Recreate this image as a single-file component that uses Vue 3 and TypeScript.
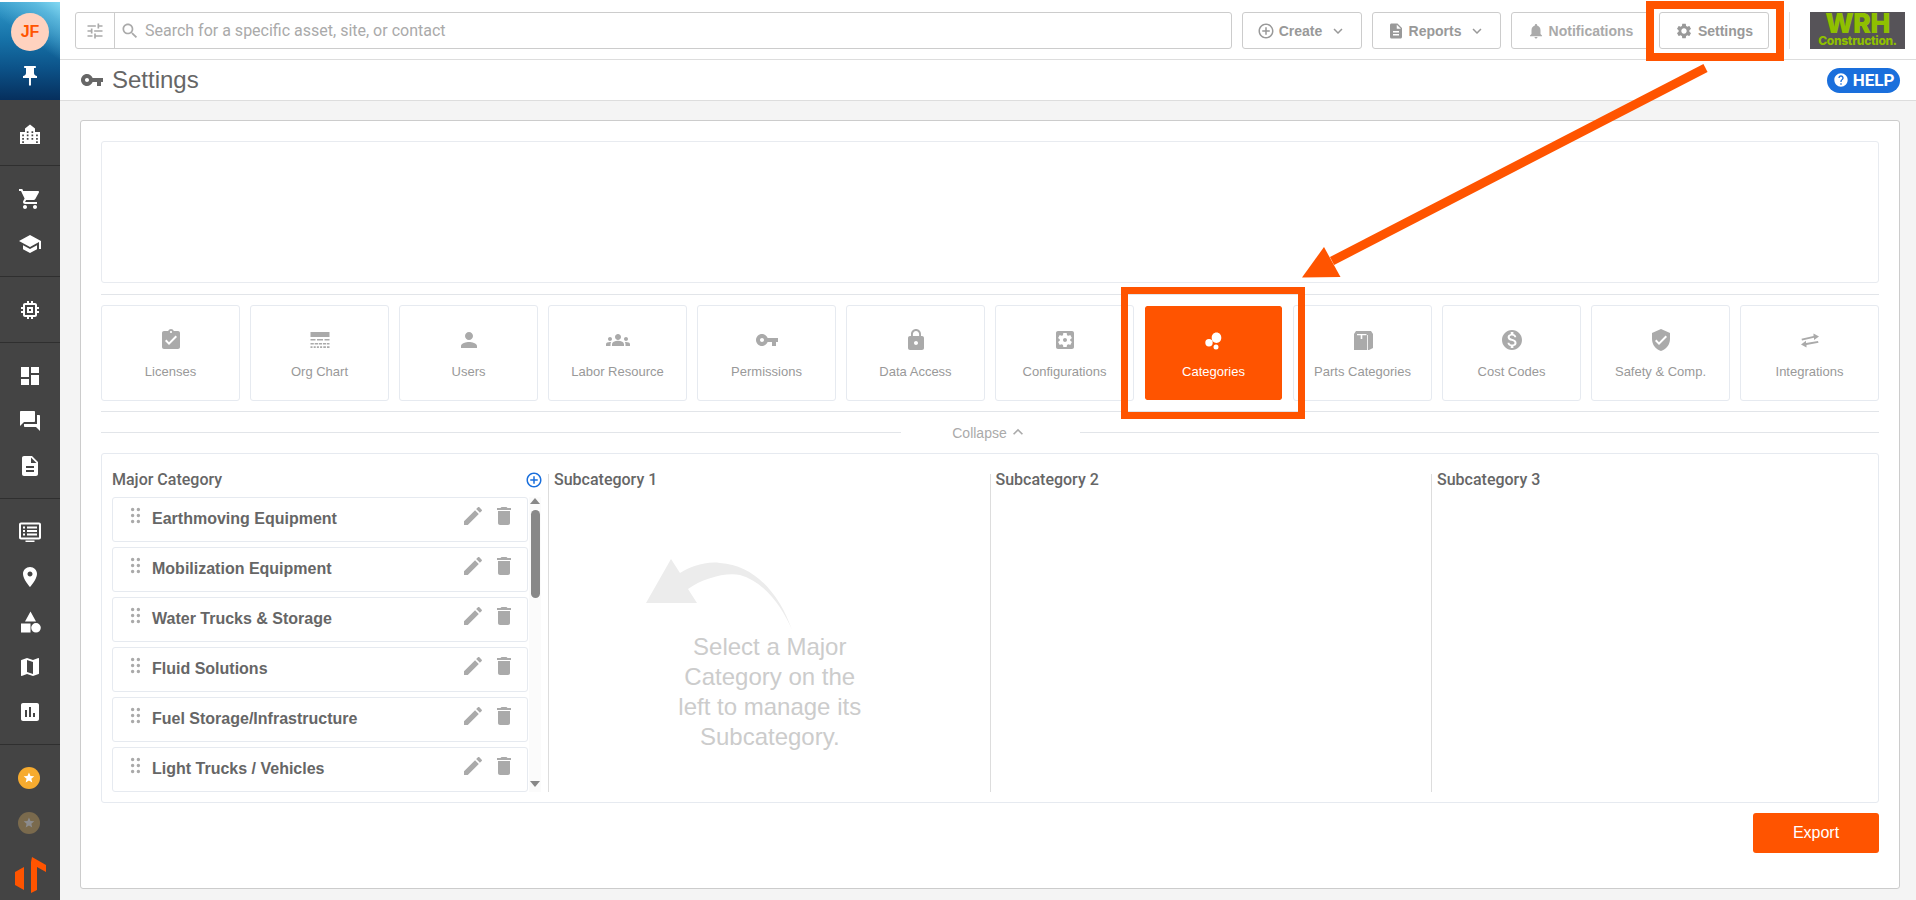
<script setup lang="ts">
const icons = {
  pin: 'M16 9V4h1c.55 0 1-.45 1-1s-.45-1-1-1H7c-.55 0-1 .45-1 1s.45 1 1 1h1v5c0 1.66-1.34 3-3 3v2h5.97v7l1 1 1-1v-7H19v-2c-1.66 0-3-1.34-3-3z',
  building: 'M2 22V10h5V6.5L12 2.5l5 4V10h5v12H2zM4.200 12.500v1.700h1.700v-1.700zM4.200 16v1.700h1.700V16zM4.200 19.200v1.700h1.700v-1.700zM8.800 9.200v1.700h1.700V9.200zM8.800 12.500v1.700h1.700v-1.700zM8.800 16v1.700h1.700V16zM13.500 9.200v1.700h1.700V9.200zM13.500 12.500v1.700h1.700v-1.700zM13.500 16v1.700h1.700V16zM18.100 12.500v1.700h1.700v-1.700zM18.100 16v1.700h1.700V16zM18.100 19.200v1.700h1.700v-1.700z',
  cart: 'M7 18c-1.1 0-1.99.9-1.99 2S5.900 22 7 22s2-.9 2-2-.9-2-2-2zM1 2v2h2l3.600 7.590-1.350 2.450c-.16.28-.25.61-.25.96 0 1.100.9 2 2 2h12v-2H7.420c-.14 0-.25-.11-.25-.25l.03-.12.9-1.630h7.450c.75 0 1.410-.41 1.750-1.030l3.580-6.490c.08-.14.12-.31.12-.48 0-.55-.45-1-1-1H5.210l-.94-2H1zm16 16c-1.100 0-1.990.9-1.990 2s.89 2 1.990 2 2-.9 2-2-.9-2-2-2z',
  school: 'M5 13.180v4L12 21l7-3.820v-4L12 17l-7-3.820zM12 3L1 9l11 6 9-4.910V17h2V9L12 3z',
  chip: 'M15 9H9v6h6V9zm-2 4h-2v-2h2v2zm8-2V9h-2V7c0-1.100-.9-2-2-2h-2V3h-2v2h-2V3H9v2H7c-1.100 0-2 .9-2 2v2H3v2h2v2H3v2h2v2c0 1.100.9 2 2 2h2v2h2v-2h2v2h2v-2h2c1.100 0 2-.9 2-2v-2h2v-2h-2v-2h2zm-4 6H7V7h10v10z',
  dashboard: 'M3 13h8V3H3v10zm0 8h8v-6H3v6zm10 0h8V11h-8v10zm0-18v6h8V3h-8z',
  forum: 'M21 6h-2v9H6v2c0 .55.45 1 1 1h11l4 4V7c0-.55-.45-1-1-1zm-4 6V3c0-.55-.45-1-1-1H3c-.55 0-1 .45-1 1v14l4-4h10c.55 0 1-.45 1-1z',
  doc: 'M14 2H6c-1.100 0-1.990.9-1.990 2L4 20c0 1.100.89 2 1.990 2H18c1.100 0 2-.9 2-2V8l-6-6zm2 16H8v-2h8v2zm0-4H8v-2h8v2zm-3-5V3.500L18.500 9H13z',
  monitor: 'M3 2.500h18c1.100 0 2 .9 2 2v13c0 1.100-.9 2-2 2H3c-1.100 0-2-.9-2-2v-13c0-1.100.9-2 2-2zM3 4.500v13h18v-13zM5 6.500h2v2H5zM9 6.500h10v2H9zM5 10h2v2H5zM9 10h10v2H9zM5 13.500h2v2H5zM9 13.500h10v2H9zM7.500 20.500h9V22h-9z',
  place: 'M12 2C8.130 2 5 5.130 5 9c0 5.250 7 13 7 13s7-7.750 7-13c0-3.870-3.130-7-7-7zm0 9.500c-1.380 0-2.500-1.120-2.500-2.500s1.120-2.500 2.500-2.500 2.500 1.120 2.500 2.500-1.120 2.500-2.500 2.500z',
  shapes: 'M12.500 1.500L18 11.500H7zM3 13.500h9.500V22.500H3zM18 13a4.800 4.800 0 1 1 0 9.600a4.800 4.800 0 1 1 0-9.600z',
  map: 'M20.500 3l-.16.03L15 5.100 9 3 3.360 4.900c-.21.07-.36.25-.36.48V20.500c0 .28.22.5.5.5l.16-.03L9 18.900l6 2.100 5.640-1.900c.21-.07.36-.25.36-.48V3.500c0-.28-.22-.5-.5-.5zM15 19l-6-2.110V5l6 2.110V19z',
  report: 'M19 3H5c-1.100 0-2 .9-2 2v14c0 1.100.9 2 2 2h14c1.100 0 2-.9 2-2V5c0-1.100-.9-2-2-2zM9 17H7v-7h2v7zm4 0h-2V7h2v10zm4 0h-2v-4h2v4z',
  key: 'M12.650 10C11.830 7.670 9.610 6 7 6c-3.310 0-6 2.690-6 6s2.690 6 6 6c2.610 0 4.830-1.670 5.650-4H17v4h4v-4h2v-4H12.650zM7 14c-1.100 0-2-.9-2-2s.9-2 2-2 2 .9 2 2-.9 2-2 2z',
  tune: 'M3 17v2h6v-2H3zM3 5v2h10V5H3zm10 16v-2h8v-2h-8v-2h-2v6h2zM7 9v2H3v2h4v2h2V9H7zm14 4v-2H11v2h10zm-6-4h2V7h4V5h-4V3h-2v6z',
  search: 'M15.500 14h-.79l-.28-.27C15.410 12.590 16 11.110 16 9.500 16 5.910 13.090 3 9.500 3S3 5.910 3 9.500 5.910 16 9.500 16c1.610 0 3.090-.59 4.230-1.570l.27.28v.79l5 4.990L20.490 19l-4.990-5zm-6 0C7.010 14 5 11.990 5 9.500S7.010 5 9.500 5 14 7.010 14 9.500 11.990 14 9.500 14z',
  add: 'M13 7h-2v4H7v2h4v4h2v-4h4v-2h-4V7zm-1-5C6.480 2 2 6.480 2 12s4.480 10 10 10 10-4.480 10-10S17.520 2 12 2zm0 18c-4.410 0-8-3.590-8-8s3.590-8 8-8 8 3.590 8 8-3.590 8-8 8z',
  down: 'M7.410 8.590L12 13.170l4.590-4.580L18 10l-6 6-6-6 1.410-1.410z',
  up: 'M12 8l-6 6 1.410 1.410L12 10.830l4.590 4.580L18 14z',
  bell: 'M12 22c1.100 0 2-.9 2-2h-4c0 1.100.89 2 2 2zm6-6v-5c0-3.070-1.640-5.640-4.500-6.320V4c0-.83-.67-1.500-1.500-1.500s-1.500.67-1.500 1.500v.68C7.630 5.360 6 7.920 6 11v5l-2 2v1h16v-1l-2-2z',
  gear: 'M19.140 12.940c.04-.3.06-.61.06-.94 0-.32-.02-.64-.07-.94l2.030-1.580c.18-.14.23-.41.12-.61l-1.920-3.320c-.12-.22-.37-.29-.59-.22l-2.390.96c-.5-.38-1.030-.7-1.620-.94l-.36-2.540c-.04-.24-.24-.41-.48-.41h-3.840c-.24 0-.43.17-.47.41l-.36 2.540c-.59.24-1.130.57-1.620.94l-2.390-.96c-.22-.08-.47 0-.59.22L2.740 8.870c-.12.21-.08.47.12.61l2.030 1.580c-.05.3-.09.63-.09.94s.02.64.07.94l-2.030 1.580c-.18.14-.23.41-.12.61l1.920 3.320c.12.22.37.29.59.22l2.390-.96c.5.38 1.030.7 1.620.94l.36 2.540c.05.24.24.41.48.41h3.840c.24 0 .44-.17.47-.41l.36-2.540c.59-.24 1.130-.56 1.620-.94l2.390.96c.22.08.47 0 .59-.22l1.920-3.320c.12-.22.07-.47-.12-.61l-2.010-1.580zM12 15.600c-1.980 0-3.600-1.620-3.600-3.600s1.620-3.600 3.600-3.600 3.600 1.620 3.600 3.600-1.620 3.600-3.600 3.600z',
  help: 'M12 2C6.480 2 2 6.480 2 12s4.480 10 10 10 10-4.480 10-10S17.520 2 12 2zm1 17h-2v-2h2v2zm2.070-7.750l-.9.92C13.450 12.900 13 13.500 13 15h-2v-.5c0-1.100.45-2.100 1.170-2.830l1.240-1.260c.37-.36.59-.86.59-1.410 0-1.100-.9-2-2-2s-2 .9-2 2H8c0-2.210 1.790-4 4-4s4 1.790 4 4c0 .88-.36 1.680-.93 2.250z',
  edit: 'M3 17.250V21h3.750L17.810 9.940l-3.750-3.750L3 17.250zM20.710 7.040c.39-.39.39-1.020 0-1.410l-2.340-2.340c-.39-.39-1.020-.39-1.410 0l-1.830 1.830 3.750 3.750 1.830-1.830z',
  trash: 'M6 19c0 1.100.9 2 2 2h8c1.100 0 2-.9 2-2V7H6v12zM19 4h-3.500l-1-1h-5l-1 1H5v2h14V4z',
  drag: 'M9 4a1.800 1.800 0 1 1 0 3.600a1.800 1.800 0 1 1 0-3.600zM15 4a1.800 1.800 0 1 1 0 3.600a1.800 1.800 0 1 1 0-3.600zM9 10.200a1.800 1.800 0 1 1 0 3.600a1.800 1.800 0 1 1 0-3.600zM15 10.200a1.800 1.800 0 1 1 0 3.600a1.800 1.800 0 1 1 0-3.600zM9 16.400a1.800 1.800 0 1 1 0 3.600a1.800 1.800 0 1 1 0-3.600zM15 16.400a1.800 1.800 0 1 1 0 3.600a1.800 1.800 0 1 1 0-3.600z',
  clipboard: 'M19 3h-4.180C14.400 1.840 13.300 1 12 1c-1.300 0-2.400.84-2.820 2H5c-1.100 0-2 .9-2 2v14c0 1.100.9 2 2 2h14c1.100 0 2-.9 2-2V5c0-1.100-.9-2-2-2zm-7 0c.55 0 1 .45 1 1s-.45 1-1 1-1-.45-1-1 .45-1 1-1zm-2 14l-4-4 1.410-1.410L10 14.170l6.590-6.590L18 9l-8 8z',
  org: 'M2.500 4h19v5h-19zM2.500 11h5v1.600h-5zM9 11h6v1.600H9zM16.500 11h5v1.600h-5zM2.500 15h3.300v1.600H2.500zM6.700 15h3.300v1.600H6.700zM10.800 15h3.300v1.600h-3.300zM15 15h3v1.600h-3zM18.800 15h2.700v1.600h-2.700zM2.500 18.300h2v1.700h-2zM5.700 18.300h2v1.700h-2zM8.900 18.300h2v1.700h-2zM12.100 18.300h2v1.700h-2zM15.300 18.300h2.600v1.700h-2.600zM19 18.300h2.500v1.700H19z',
  person: 'M12 12c2.210 0 4-1.790 4-4s-1.790-4-4-4-4 1.790-4 4 1.790 4 4 4zm0 2c-2.670 0-8 1.340-8 4v2h16v-2c0-2.660-5.330-4-8-4z',
  groups: 'M4 13c1.100 0 2-.9 2-2 0-1.100-.9-2-2-2s-2 .9-2 2c0 1.100.9 2 2 2zM5.130 14.100C4.760 14.040 4.390 14 4 14c-.99 0-1.930.21-2.780.58C.48 14.900 0 15.620 0 16.430V18h4.500v-1.610c0-.83.23-1.610.63-2.290zM20 13c1.100 0 2-.9 2-2 0-1.100-.9-2-2-2s-2 .9-2 2c0 1.100.9 2 2 2zM24 16.430c0-.81-.48-1.530-1.220-1.850C21.930 14.210 20.990 14 20 14c-.39 0-.76.04-1.130.1.4.68.63 1.460.63 2.290V18H24v-1.570zM16.240 13.650c-1.170-.52-2.610-.9-4.240-.9-1.630 0-3.070.39-4.240.9C6.680 14.130 6 15.210 6 16.390V18h12v-1.610c0-1.180-.68-2.260-1.760-2.740zM12 12c1.660 0 3-1.340 3-3s-1.340-3-3-3-3 1.340-3 3 1.340 3 3 3z',
  lock: 'M18 8h-1V6c0-2.760-2.240-5-5-5S7 3.240 7 6v2H6c-1.100 0-2 .9-2 2v10c0 1.100.9 2 2 2h12c1.100 0 2-.9 2-2V10c0-1.100-.9-2-2-2zm-6 9c-1.100 0-2-.9-2-2s.9-2 2-2 2 .9 2 2-.9 2-2 2zm3.100-9H8.900V6c0-1.710 1.390-3.100 3.100-3.100 1.710 0 3.100 1.390 3.100 3.100v2z',
  config: 'M12 10c-1.100 0-2 .9-2 2s.9 2 2 2 2-.9 2-2-.9-2-2-2zm7-7H5c-1.110 0-2 .9-2 2v14c0 1.100.89 2 2 2h14c1.110 0 2-.9 2-2V5c0-1.100-.89-2-2-2zm-1.750 9c0 .23-.02.46-.05.68l1.480 1.160c.13.11.17.3.08.45l-1.400 2.420c-.09.15-.27.21-.43.15l-1.740-.7c-.36.28-.76.51-1.180.69l-.26 1.850c-.03.17-.18.3-.35.3h-2.800c-.17 0-.32-.13-.35-.29l-.26-1.850c-.43-.18-.82-.41-1.180-.69l-1.740.7c-.16.06-.34 0-.43-.15l-1.400-2.420c-.09-.15-.05-.34.08-.45l1.480-1.160c-.03-.23-.05-.46-.05-.69 0-.23.02-.46.05-.68l-1.480-1.160c-.13-.11-.17-.3-.08-.45l1.400-2.420c.09-.15.27-.21.43-.15l1.740.7c.36-.28.76-.51 1.180-.69l.26-1.850c.03-.17.18-.3.35-.3h2.800c.17 0 .32.13.35.29l.26 1.850c.43.18.82.41 1.180.69l1.740-.7c.16-.06.34 0 .43.15l1.400 2.420c.09.15.05.34-.08.45l-1.480 1.160c.03.23.05.46.05.69z',
  bubbles: 'M14.500 4.500c2.800 0 4.800 2.200 4.800 5.200s-2 5.200-4.800 5.200-4.800-2.200-4.800-5.200 2-5.200 4.800-5.200zM7 11a3.700 3.700 0 1 1 0 7.400A3.700 3.700 0 1 1 7 11zM14 16.500a2.500 2.500 0 1 1 0 5a2.500 2.500 0 1 1 0-5z',
  box: 'M5 3H20L22 6V20L18 22H3V6zM6 6v1.300h3.700V11h1.600V7.300h4.200V6zM16 7v15h.8V7z',
  dollar: 'M12 2C6.480 2 2 6.480 2 12s4.480 10 10 10 10-4.480 10-10S17.520 2 12 2zm1.410 16.090V20h-2.670v-1.930c-1.710-.36-3.160-1.460-3.270-3.400h1.960c.1 1.050.82 1.870 2.650 1.870 1.960 0 2.400-.98 2.400-1.590 0-.83-.44-1.610-2.670-2.140-2.480-.6-4.180-1.620-4.180-3.670 0-1.720 1.390-2.840 3.110-3.210V4h2.670v1.950c1.860.45 2.790 1.860 2.850 3.390H14.300c-.05-1.110-.64-1.870-2.220-1.870-1.500 0-2.400.68-2.400 1.640 0 .84.65 1.390 2.670 1.910s4.180 1.390 4.180 3.910c-.01 1.830-1.380 2.830-3.120 3.160z',
  shield: 'M12 1L3 5v6c0 5.550 3.840 10.740 9 12 5.160-1.260 9-6.450 9-12V5l-9-4zm-2 16l-4-4 1.410-1.410L10 14.170l6.590-6.590L18 9l-8 8z',
  swap: 'M4 12.500L16 9.800V12L21 8.500L15.500 5.500V8L3.500 10.700zM20 13L8 15V12.800L3 16.500L8.500 19.500V17L20.500 14.800z'
}

const sideGroups: string[][] = [
  [icons.building],
  [icons.cart, icons.school],
  [icons.chip],
  [icons.dashboard, icons.forum, icons.doc],
  [icons.monitor, icons.place, icons.shapes, icons.map, icons.report]
]

const tiles = [
  { label: 'Licenses', icon: icons.clipboard },
  { label: 'Org Chart', icon: icons.org },
  { label: 'Users', icon: icons.person },
  { label: 'Labor Resource', icon: icons.groups },
  { label: 'Permissions', icon: icons.key },
  { label: 'Data Access', icon: icons.lock },
  { label: 'Configurations', icon: icons.config },
  { label: 'Categories', icon: icons.bubbles, active: true },
  { label: 'Parts Categories', icon: icons.box },
  { label: 'Cost Codes', icon: icons.dollar },
  { label: 'Safety & Comp.', icon: icons.shield },
  { label: 'Integrations', icon: icons.swap }
]

const categories = [
  'Earthmoving Equipment',
  'Mobilization Equipment',
  'Water Trucks & Storage',
  'Fluid Solutions',
  'Fuel Storage/Infrastructure',
  'Light Trucks / Vehicles'
]

const starPath = 'M12 17.270L18.180 21l-1.640-7.030L22 9.240l-7.190-.61L12 2 9.190 8.630 2 9.240l5.460 4.730L5.820 21z'
</script>

<template>
  <div class="app">
    <aside class="side">
      <div class="side-top">
        <div class="avatar">JF</div>
        <svg class="side-icon pin" viewBox="0 0 24 24"><path :d="icons.pin" /></svg>
      </div>
      <div v-for="(group, g) in sideGroups" :key="g" class="side-group" :class="'g' + g">
        <div v-for="(d, i) in group" :key="i" class="side-row">
          <svg class="side-icon" viewBox="0 0 24 24"><path :d="d" /></svg>
        </div>
      </div>
      <div class="side-end">
        <div class="side-row">
          <svg class="star" viewBox="0 0 24 24"><circle cx="12" cy="12" r="12" fill="#f6ab2f" /><path :d="starPath" fill="#fff" transform="translate(5 4.800) scale(.58)" /></svg>
        </div>
        <div class="side-row">
          <svg class="star" viewBox="0 0 24 24"><circle cx="12" cy="12" r="12" fill="#7a6a4d" /><path :d="starPath" fill="#8c8c8e" transform="translate(5 4.800) scale(.58)" /></svg>
        </div>
        <svg class="brand" viewBox="0 0 31 36">
          <path d="M0 15L9 10V33L0 28z" fill="#ff5400" />
          <path d="M16 5L17 0L31 8V15L22 10V33L16 36z" fill="#ff5400" />
        </svg>
      </div>
    </aside>

    <div class="main">
      <header class="top">
        <div class="search">
          <div class="search-tune"><svg class="i20" viewBox="0 0 24 24"><path :d="icons.tune" /></svg></div>
          <svg class="i20 search-glass" viewBox="0 0 24 24"><path :d="icons.search" /></svg>
          <span class="search-text">Search for a specific asset, site, or contact</span>
        </div>
        <button class="tbtn b-create"><svg class="i18" viewBox="0 0 24 24"><path :d="icons.add" /></svg><span>Create</span><svg class="i18 chev" viewBox="0 0 24 24"><path :d="icons.down" /></svg></button>
        <button class="tbtn b-reports"><svg class="i18" viewBox="0 0 24 24"><path :d="icons.doc" /></svg><span>Reports</span><svg class="i18 chev" viewBox="0 0 24 24"><path :d="icons.down" /></svg></button>
        <button class="tbtn b-notes"><svg class="i18" viewBox="0 0 24 24"><path :d="icons.bell" /></svg><span>Notifications</span></button>
        <button class="tbtn b-settings"><svg class="i18" viewBox="0 0 24 24"><path :d="icons.gear" /></svg><span>Settings</span></button>
        <div class="vsep"></div>
        <div class="logo">
          <span class="logo-big">WRH</span>
          <span class="logo-small">Construction.</span>
        </div>
      </header>

      <div class="title-bar">
        <svg class="title-key" viewBox="0 0 24 24"><path :d="icons.key" /></svg>
        <h1 class="title">Settings</h1>
        <div class="help"><svg class="help-icon" viewBox="0 0 24 24"><path :d="icons.help" /></svg><span>HELP</span></div>
      </div>

      <div class="content">
        <section class="card">
          <div class="blank"></div>
          <hr class="rule rule-a" />
          <div class="tiles">
            <div v-for="t in tiles" :key="t.label" class="tile" :class="{ active: t.active }">
              <svg class="tile-icon" viewBox="0 0 24 24"><path :d="t.icon" /></svg>
              <span class="tile-label">{{ t.label }}</span>
            </div>
          </div>
          <hr class="rule rule-b" />
          <div class="collapse">
            <span class="collapse-line"></span>
            <span class="collapse-text">Collapse<svg class="collapse-up" viewBox="0 0 24 24"><path :d="icons.up" /></svg></span>
            <span class="collapse-line"></span>
          </div>

          <div class="panel">
            <div class="col col-major">
              <div class="col-head">
                <span>Major Category</span>
                <svg class="col-add" viewBox="0 0 24 24"><path :d="icons.add" /></svg>
              </div>
              <div class="major-body">
                <ul class="rows">
                  <li v-for="c in categories" :key="c" class="row">
                    <svg class="row-drag" viewBox="0 0 24 24"><path :d="icons.drag" /></svg>
                    <span class="row-text">{{ c }}</span>
                    <svg class="row-act" viewBox="0 0 24 24"><path :d="icons.edit" /></svg>
                    <svg class="row-act row-trash" viewBox="0 0 24 24"><path :d="icons.trash" /></svg>
                  </li>
                </ul>
                <div class="scroll">
                  <span class="sc-up"></span>
                  <span class="sc-thumb"></span>
                  <span class="sc-down"></span>
                </div>
              </div>
            </div>
            <div class="col">
              <div class="col-head"><span>Subcategory 1</span></div>
              <div class="empty">
                <svg class="empty-arrow" viewBox="0 0 160 77">
                  <path d="M31 4L6 48L57 48L48 34C62 24 85 17 100 20C125 27 143 53 152 75C140 40 115 10 80 8C65 6 50 12 40 18Z" fill="#ececec" />
                </svg>
                <p class="empty-text">Select a Major Category on the left to manage its Subcategory.</p>
              </div>
            </div>
            <div class="col">
              <div class="col-head"><span>Subcategory 2</span></div>
            </div>
            <div class="col col-last">
              <div class="col-head"><span>Subcategory 3</span></div>
            </div>
          </div>

          <div class="foot"><button class="export">Export</button></div>
        </section>
      </div>
    </div>

    <div class="mark mark-settings"></div>
    <div class="mark mark-tile"></div>
    <svg class="mark-arrow" viewBox="0 0 1916 900">
      <path d="M1705.500 68L1332 261" stroke="#ff5400" stroke-width="9" fill="none" />
      <path d="M1302 277.500L1324 247L1340.500 277z" fill="#ff5400" />
    </svg>
  </div>
</template>

<style>
html, body { margin: 0; background: #f4f4f4; overflow: hidden; }
</style>

<style scoped>
.app {
  position: relative;
  display: flex;
  width: 1916px;
  height: 900px;
  overflow: hidden;
  font-family: Roboto, "Liberation Sans", sans-serif;
  color: #666;
  background: #f4f4f4;
}
svg { display: block; flex: none; fill: currentColor; }
button { font-family: inherit; }

/* sidebar */
.side { width: 60px; flex: none; background: #444; color: #fff; display: flex; flex-direction: column; }
.side-top {
  height: 98px;
  margin-top: 2px;
  padding-top: 11px;
  box-sizing: border-box;
  display: flex;
  flex-direction: column;
  align-items: center;
  background:
    linear-gradient(215deg, rgba(135, 220, 245, .95) 0, rgba(110, 200, 232, .7) 14%, rgba(40, 140, 190, 0) 42%),
    linear-gradient(180deg, #2f97c8 0, #1672a8 38%, #0c5288 68%, #062f5d 100%);
  box-shadow: 0 -2px 0 #fff;
}
.avatar {
  width: 38px; height: 38px; border-radius: 50%;
  background: #ffd2bf; color: #ff5400;
  font: 700 16px/38px "Liberation Sans", Arial, sans-serif; text-align: center;
}
.pin { margin-top: 13px; }
.side-icon { width: 24px; height: 24px; }
.side-group { padding: 10px 0; border-bottom: 1px solid #2f2f2f; }
.side-group.g0 { padding: 11px 0 9px; }
.side-row { height: 45px; display: flex; align-items: center; justify-content: center; }
.side-end { padding-top: 10px; }
.star { width: 22px; height: 22px; margin-left: -2px; }
.brand { width: 31px; height: 36px; margin: 12px 0 0 15px; }

/* main */
.main { flex: 1; min-width: 0; display: flex; flex-direction: column; }
.top {
  height: 60px;
  box-sizing: border-box;
  padding: 12px 11px 10px 15px;
  background: #fff;
  border-bottom: 1px solid #ddd;
  display: flex;
  align-items: stretch;
}
.search {
  flex: 1;
  display: flex;
  align-items: center;
  border: 1px solid #ccc;
  border-radius: 3px;
  color: #aaa;
  margin-right: 10px;
}
.search-tune { width: 38px; height: 100%; border-right: 1px solid #ccc; display: flex; align-items: center; justify-content: center; color: #aaa; }
.search-glass { margin-left: 5px; }
.search-text { margin-left: 5px; font-size: 16px; color: #aaa; white-space: nowrap; }
.i20 { width: 20px; height: 20px; }
.i18 { width: 18px; height: 18px; }
.tbtn {
  box-sizing: border-box;
  margin: 0 10px 0 0;
  padding: 0;
  border: 1px solid #ccc;
  border-radius: 3px;
  background: #fff;
  color: #999;
  font: 700 14px "Liberation Sans", Arial, sans-serif;
  display: flex;
  align-items: center;
  justify-content: center;
  gap: 4px;
}
.chev { margin-left: 3px; }
.b-create { width: 120px; }
.b-reports { width: 129px; }
.b-notes { width: 138px; color: #aaa; }
.b-settings { width: 110px; margin-right: 0; gap: 5px; }
.vsep { width: 1px; background: #e2e2e2; margin: 0 20px; }
.logo {
  width: 95px;
  padding-top: 1px;
  box-sizing: border-box;
  background: #565358;
  color: #8fc000;
  display: flex;
  flex-direction: column;
  align-items: center;
  justify-content: flex-start;
  font-family: Inter, Roboto, sans-serif;
}
.logo-big { font-size: 26.500px; font-weight: 900; line-height: 21px; letter-spacing: -.6px; }
.logo-small { font-size: 12px; font-weight: 800; line-height: 13px; letter-spacing: -.3px; }

.title-bar {
  height: 41px;
  box-sizing: border-box;
  padding: 0 16px 1px 20px;
  background: #fff;
  border-bottom: 1px solid #ddd;
  display: flex;
  align-items: center;
}
.title-key { width: 24px; height: 24px; color: #666; }
.title { margin: 0 0 0 8px; font: 400 24px "Liberation Sans", Arial, sans-serif; color: #666; flex: 1; }
.help {
  width: 73px; height: 25px; margin-top: 1px;
  border-radius: 13px;
  background: #1a6fdc;
  color: #fff;
  font-size: 17px;
  font-weight: 700;
  display: flex;
  align-items: center;
  justify-content: center;
  gap: 4px;
}
.help-icon { width: 16px; height: 16px; }

.content { flex: 1; padding: 19px 16px 11px 20px; min-height: 0; }
.card {
  height: 100%;
  box-sizing: border-box;
  padding: 20px 20px 0;
  background: #fff;
  border: 1px solid #ccc;
  border-radius: 3px;
}
.blank { height: 142px; box-sizing: border-box; border: 1px solid #e8ebf0; border-radius: 3px; }
.rule { margin: 0; border: 0; height: 1px; background: #e2e5e9; }
.rule-a { margin-top: 11px; }
.rule-b { margin-top: 10px; }
.tiles { display: grid; grid-template-columns: repeat(12, 139px); column-gap: 10px; margin-top: 10px; }
.tile {
  height: 96px;
  box-sizing: border-box;
  padding-top: 22px;
  border: 1px solid #e6eaf0;
  border-radius: 3px;
  display: flex;
  flex-direction: column;
  align-items: center;
  color: #aaa;
}
.tile-icon { width: 24px; height: 24px; }
.tile-label { margin-top: 12px; font: 400 13px/16px "Liberation Sans", Arial, sans-serif; color: #999; white-space: nowrap; }
.tile.active { background: #ff5400; background-clip: padding-box; border-color: #fff; color: #fff; }
.tile.active .tile-label { color: #fff; }

.collapse { display: flex; align-items: center; height: 20px; margin-top: 10px; }
.collapse-line { flex: 1; height: 1px; background: #e2e5e9; }
.collapse-text { width: 179px; padding-top: 2px; box-sizing: border-box; display: flex; align-items: center; justify-content: center; font: 400 14px "Liberation Sans", Arial, sans-serif; color: #aaa; gap: 1px; }
.collapse-up { width: 20px; height: 20px; color: #aaa; margin-top: -2px; }

.panel {
  height: 350px;
  margin-top: 11px;
  box-sizing: border-box;
  padding: 20px 10px 10px;
  border: 1px solid #e6eaf0;
  border-radius: 3px;
  display: grid;
  grid-template-columns: 437px 441.500px 441.500px 1fr;
}
.col { border-right: 1px solid #ddd; padding-left: 5px; min-width: 0; }
.col-major { padding-left: 0; padding-right: 5px; }
.col-last { border-right: 0; }
.col-head {
  height: 23px;
  display: flex;
  justify-content: space-between;
  font-size: 16px;
  font-weight: 500;
  line-height: 12px;
  color: #666;
}
.col-add { width: 18px; height: 18px; color: #1a6fdc; margin-top: -3px; }
.major-body { display: flex; height: 295px; }
.rows { list-style: none; margin: 0; padding: 0; width: 416px; flex: none; display: flex; flex-direction: column; gap: 5px; }
.row {
  height: 45px;
  box-sizing: border-box;
  border: 1px solid #e6eaf0;
  border-radius: 3px;
  display: flex;
  align-items: flex-start;
  padding-left: 10.500px;
}
.row-drag { width: 23px; height: 23px; color: #aaa; margin-top: 6px; }
.row-text { width: 309px; margin-left: 5.500px; font: 700 16px/42px "Liberation Sans", Arial, sans-serif; color: #666; white-space: nowrap; }
.row-act { width: 24px; height: 24px; color: #aaa; margin-top: 6px; }
.row-trash { margin-left: 7px; }
.scroll { width: 12px; margin-left: 1px; background: #fbfbfb; display: flex; flex-direction: column; align-items: center; }
.sc-up { width: 0; height: 0; margin-top: 1px; border: 5px solid transparent; border-top: 0; border-bottom: 6px solid #888; }
.sc-thumb { width: 9px; height: 88px; margin-top: 6px; border-radius: 4.500px; background: #888; }
.sc-down { width: 0; height: 0; margin-top: auto; margin-bottom: 5px; border: 5px solid transparent; border-bottom: 0; border-top: 6px solid #888; }

.empty { display: flex; flex-direction: column; align-items: center; padding-right: 4px; }
.empty-arrow { width: 160px; height: 77px; margin: 58px 100px 0 0; }
.empty-text { width: 200px; margin: 0; font: 400 24px/30px "Liberation Sans", Arial, sans-serif; color: #ccc; text-align: center; }

.foot { display: flex; justify-content: flex-end; margin-top: 10px; }
.export {
  width: 126px; height: 40px;
  border: 0; border-radius: 3px;
  background: #ff5400; color: #fff;
  font: 400 16px "Liberation Sans", Arial, sans-serif;
}

/* annotations */
.mark { position: absolute; box-sizing: border-box; border-style: solid; border-color: #ff5400; }
.mark-settings { left: 1646px; top: 1px; width: 138px; height: 60px; border-width: 8px; }
.mark-tile { left: 1121px; top: 287px; width: 184px; height: 132px; border-width: 7px; }
.mark-arrow { position: absolute; left: 0; top: 0; width: 1916px; height: 900px; pointer-events: none; }
</style>
